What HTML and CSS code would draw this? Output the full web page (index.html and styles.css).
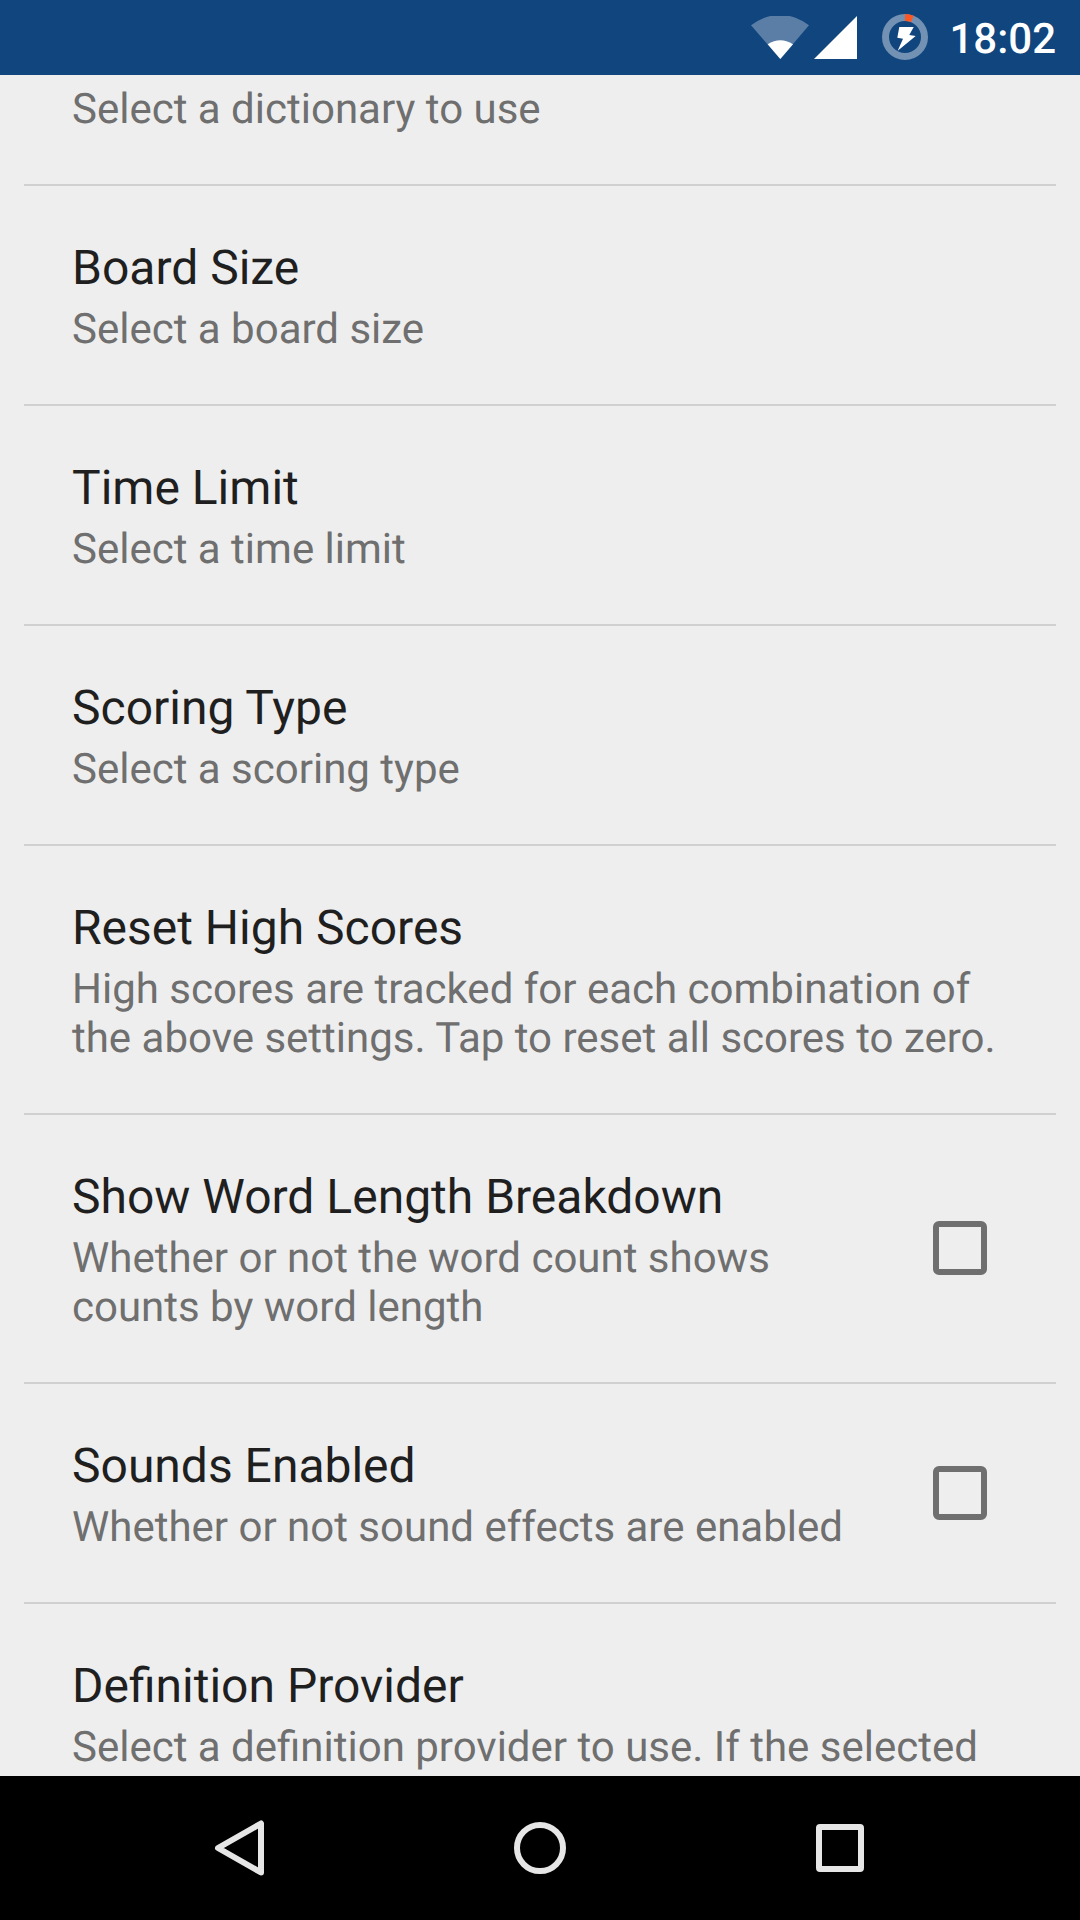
FILE: index.html
```html
<!DOCTYPE html>
<html lang="en">
<head>
<meta charset="utf-8">
<title>Settings</title>
<link rel="stylesheet" href="styles.css">
</head>
<body>
<header class="status">
  <svg class="wifi" viewBox="0 0 58 43"><path class="dim" d="M29.300 43 0 9.300A46 46 0 0 1 58 9.300z"/><path d="M29.300 43 16.700 28.300Q29.300 20 42 28.300z"/></svg>
  <svg class="signal" viewBox="0 0 43 43"><path d="M43 0v43H0z"/></svg>
  <svg class="battery" viewBox="0 0 46 46"><circle class="ring" cx="23" cy="23" r="19.500"/><path class="level" d="M23 3.500a19.500 19.500 0 0 1 7.300 1.420"/><path d="M17.300 13h14.400l-4.400 8 6.400 1-18 14.700 5.300-12-5.700-1z"/></svg>
  <span class="clock">18:02</span>
</header>
<main class="list">
  <section class="item first"><div class="text"><h2>Dictionary</h2><p>Select a dictionary to use</p></div></section>
  <section class="item"><div class="text"><h2>Board Size</h2><p>Select a board size</p></div></section>
  <section class="item"><div class="text"><h2>Time Limit</h2><p>Select a time limit</p></div></section>
  <section class="item"><div class="text"><h2>Scoring Type</h2><p>Select a scoring type</p></div></section>
  <section class="item"><div class="text"><h2>Reset High Scores</h2><p>High scores are tracked for each combination of<br>the above settings. Tap to reset all scores to zero.</p></div></section>
  <section class="item"><div class="text"><h2>Show Word Length Breakdown</h2><p>Whether or not the word count shows<br>counts by word length</p></div><span class="check"></span></section>
  <section class="item"><div class="text"><h2>Sounds Enabled</h2><p>Whether or not sound effects are enabled</p></div><span class="check"></span></section>
  <section class="item"><div class="text"><h2>Definition Provider</h2><p>Select a definition provider to use. If the selected</p></div></section>
</main>
<nav class="nav">
  <svg viewBox="0 0 60 60"><path d="M51 5.500v49L8 30z"/></svg>
  <svg viewBox="0 0 60 60"><circle cx="30" cy="30" r="23"/></svg>
  <svg viewBox="0 0 60 60"><rect x="9" y="9" width="42" height="42" rx="1"/></svg>
</nav>
</body>
</html>
```

FILE: styles.css
```css
* { box-sizing: border-box; }
body { margin: 0; width: 1080px; height: 1920px; overflow: hidden; display: flex; flex-direction: column; background: #eee; font-family: Roboto, sans-serif; text-rendering: geometricPrecision; }
.status { height: 75px; flex: none; background: #10457e; display: flex; align-items: flex-start; justify-content: flex-end; padding-right: 24px; color: #fff; }
.status svg { fill: #fff; flex: none; }
.wifi { width: 58px; height: 43px; margin: 16px 5px 0 0; }
.dim { opacity: .31; }
.signal { width: 43px; height: 43px; margin: 16px 25px 0 0; }
.battery { width: 46px; height: 46px; margin: 14px 21px 0 0; }
.battery .ring { fill: none; stroke: #7391b2; stroke-width: 7; }
.battery .level { fill: none; stroke: #ff5722; stroke-width: 7; }
.clock { font-size: 42px; font-weight: 500; line-height: 49px; margin-top: 15px; }
.list { height: 1701px; flex: none; overflow: hidden; padding: 0 24px; }
.item { display: flex; justify-content: space-between; align-items: center; padding: 54px 48px 50px; border-bottom: 2px solid #d0d0d0; }
.item.first { margin-top: -109px; }
h2 { margin: 0 0 9px; font-size: 48px; font-weight: 400; line-height: 56px; color: #1f1f1f; white-space: nowrap; }
p { margin: 0; font-size: 42px; line-height: 49px; color: #6f6f6f; white-space: nowrap; }
.check { width: 54px; height: 54px; flex: none; border: 6px solid #6f6f6f; border-radius: 6px; margin: 0 21px 5px 0; }
.nav { height: 144px; flex: none; background: #000; display: flex; justify-content: center; gap: 240px; align-items: center; }
.nav svg { width: 60px; height: 60px; fill: none; stroke: #e6e6e6; stroke-width: 6; stroke-linejoin: round; }
```
